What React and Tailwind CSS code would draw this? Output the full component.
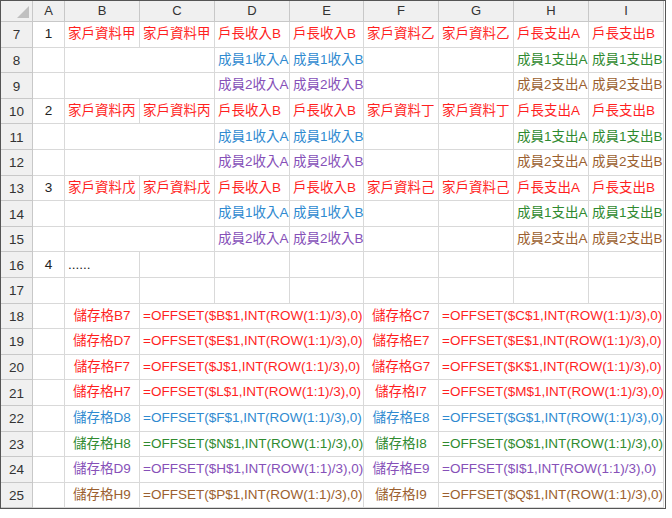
import React from 'react';

const R = 'text-[#ff1f1f]';
const BL = 'text-[#2f8ad0]';
const PU = 'text-[#8650b8]';
const GR = 'text-[#2f8a2f]';
const BR = 'text-[#9b5f2f]';

const COLS = ['A', 'B', 'C', 'D', 'E', 'F', 'G', 'H', 'I'];
const WIDTHS = '32px 32px 75px 75px 75px 74px 75px 75px 75px 75px';

// each row: [rowNum, cells] ; cell = {t, c, span, align}
const household = (num, a, b) => [
  { t: num, align: 'center' },
  { t: a, c: R },
  { t: a, c: R },
  { t: '戶長收入B', c: R },
  { t: '戶長收入B', c: R },
  { t: b, c: R },
  { t: b, c: R },
  { t: '戶長支出A', c: R },
  { t: '戶長支出B', c: R },
];
const member = (n, inc, exp, noLine) => [
  {},
  { span: 2 },
  { t: `成員${n}收入A`, c: inc },
  { t: `成員${n}收入B`, c: inc },
  {},
  {},
  { t: `成員${n}支出A`, c: exp },
  { t: `成員${n}支出B`, c: exp },
];

const ROWS = [
  [7, household('1', '家戶資料甲', '家戶資料乙')],
  [8, member(1, BL, GR)],
  [9, member(2, PU, BR)],
  [10, household('2', '家戶資料丙', '家戶資料丁')],
  [11, member(1, BL, GR)],
  [12, member(2, PU, BR)],
  [13, [
    { t: '3', align: 'center' },
    { t: '家戶資料戊', c: R },
    { t: '家戶資料戊', c: R },
    { t: '戶長收入B', c: R },
    { t: '戶長收入B', c: R },
    { t: '家戶資料己', c: R },
    { t: '家戶資料己', c: R },
    { t: '戶長支出A', c: R },
    { t: '戶長支出B', c: R },
  ]],
  [14, member(1, BL, GR)],
  [15, member(2, PU, BR)],
  [16, [{ t: '4', align: 'center' }, { t: '......' }, {}, {}, {}, {}, {}, {}, {}]],
  [17, [{}, {}, {}, {}, {}, {}, {}, {}, {}]],
];

const FORMULAS = [
  ['B7', 'B', 'C7', 'C', R, R],
  ['D7', 'E', 'E7', 'E', R, R],
  ['F7', 'J', 'G7', 'K', R, R],
  ['H7', 'L', 'I7', 'M', R, R],
  ['D8', 'F', 'E8', 'G', BL, BL],
  ['H8', 'N', 'I8', 'O', GR, GR],
  ['D9', 'H', 'E9', 'I', PU, PU],
  ['H9', 'P', 'I9', 'Q', BR, BR],
];

FORMULAS.forEach(([l1, c1, l2, c2, k1], i) => {
  ROWS.push([18 + i, [
    {},
    { t: `儲存格${l1}`, c: k1, align: 'center' },
    { t: `=OFFSET($${c1}$1,INT(ROW(1:1)/3),0)`, c: k1, span: 3 },
    { t: `儲存格${l2}`, c: k1, align: 'center' },
    { t: `=OFFSET($${c2}$1,INT(ROW(1:1)/3),0)`, c: k1, span: 3 },
  ]]);
});

const Cell = ({ cell }) => (
  <div
    className={`h-[25.6px] border-r border-b border-[#d9d9d9] bg-white flex items-center px-[3px] whitespace-nowrap overflow-visible text-[13.5px] ${cell.c || 'text-[#222]'} ${cell.align === 'center' ? 'justify-center' : ''}`}
    style={cell.span ? { gridColumn: `span ${cell.span}` } : undefined}
  >
    {cell.t}
  </div>
);

export default function App() {
  return (
    <div className="w-[672px] h-[518px] bg-white overflow-hidden" style={{ fontFamily: '"Liberation Sans", "Noto Sans CJK TC", sans-serif' }}>
      <div className="w-[666px] border border-[#555] bg-white overflow-hidden">
        <div className="grid" style={{ gridTemplateColumns: WIDTHS }}>
          <div className="h-[21px] bg-[#f0f0f0] border-r border-b border-[#c8c8c8] relative">
            <div className="absolute right-[3px] bottom-[3px] w-0 h-0 border-l-[12px] border-l-transparent border-b-[12px] border-b-[#c0c0c0]" />
          </div>
          {COLS.map((c) => (
            <div key={c} className="h-[21px] bg-[#f0f0f0] border-r border-b border-[#c8c8c8] flex items-center justify-center text-[13px] text-[#333]">
              {c}
            </div>
          ))}
          {ROWS.map(([n, cells]) => (
            <React.Fragment key={n}>
              <div className="h-[25.6px] bg-[#f0f0f0] border-r border-b border-[#c8c8c8] flex items-end justify-center pb-[1px] text-[13.5px] text-[#333]">
                {n}
              </div>
              {cells.map((cell, i) => (
                <Cell key={i} cell={cell} />
              ))}
            </React.Fragment>
          ))}
        </div>
      </div>
    </div>
  );
}
